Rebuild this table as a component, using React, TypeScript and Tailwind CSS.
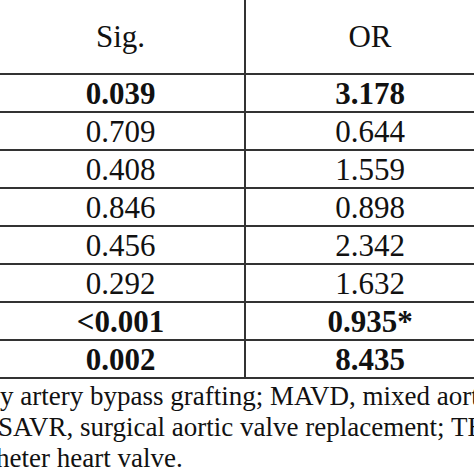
import React from "react";

const rows: { sig: string; or: string; bold?: boolean }[] = [
  { sig: "0.039", or: "3.178", bold: true },
  { sig: "0.709", or: "0.644" },
  { sig: "0.408", or: "1.559" },
  { sig: "0.846", or: "0.898" },
  { sig: "0.456", or: "2.342" },
  { sig: "0.292", or: "1.632" },
  { sig: "<0.001", or: "0.935*", bold: true },
  { sig: "0.002", or: "8.435", bold: true },
];

export default function App() {
  return (
    <div
      className="w-[474px] h-[474px] overflow-hidden bg-white text-[#111]"
      style={{ fontFamily: '"Liberation Serif", "Times New Roman", serif' }}
    >
      <div className="ml-[-3px] w-[497px] text-[31px] leading-none">
        <div className="flex h-[75px] border-b-2 border-[#333]">
          <div className="w-[249px] border-r-2 border-[#333] flex items-center justify-center">
            Sig.
          </div>
          <div className="flex-1 flex items-center justify-center">OR</div>
        </div>
        {rows.map((r, i) => (
          <div
            key={i}
            className={`flex h-[38px] border-b-2 border-[#333] ${r.bold ? "font-bold" : ""}`}
          >
            <div className="w-[249px] border-r-2 border-[#333] flex items-center justify-center">
              {r.sig}
            </div>
            <div className="flex-1 flex items-center justify-center">{r.or}</div>
          </div>
        ))}
      </div>
      <div className="pt-[2px] text-[27px] leading-[31px] whitespace-nowrap">
        <div className="ml-[0px]">y artery bypass grafting; MAVD, mixed aortic valve disease;</div>
        <div className="ml-[-2px]">SAVR, surgical aortic valve replacement; THV,</div>
        <div className="ml-[-4px]">heter heart valve.</div>
      </div>
    </div>
  );
}
